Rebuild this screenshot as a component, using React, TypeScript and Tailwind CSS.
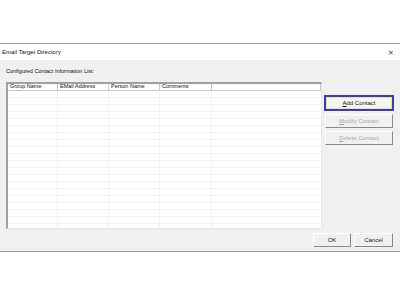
import React from "react";

const cols = [
  { name: "Group Name", w: 50 },
  { name: "EMail Address", w: 51 },
  { name: "Person Name", w: 51 },
  { name: "Comments", w: 52 },
];

function Btn({ children, disabled, focused, w }: { children: React.ReactNode; disabled?: boolean; focused?: boolean; w: string }) {
  return (
    <div
      className={
        "flex items-center justify-center h-[14px] text-[6px] leading-none border " +
        w +
        (focused
          ? " border-[#3a3aa8] border-2 bg-[#f4f4f4] text-[#111]"
          : " border-t-[#ffffff] border-l-[#ffffff] border-r-[#8a8a8a] border-b-[#8a8a8a] bg-[#f0f0f0]") +
        (disabled ? " text-[#a8a8a8]" : " text-[#111]")
      }
    >
      {children}
    </div>
  );
}

export default function App() {
  const rows = Array.from({ length: 20 });
  return (
    <div className="w-[400px] h-[300px] bg-white overflow-hidden" style={{ fontFamily: '"Liberation Sans", Arial, sans-serif' }}>
      <div className="h-[43px]" />
      <div className="border-t border-b border-[#9a9a9a]">
        <div className="h-[16px] bg-white flex items-center justify-between pl-[2px] pr-[6px]">
          <span className="text-[6px] text-[#111] leading-none">Email Target Directory</span>
          <span className="text-[7px] text-[#444] leading-none">✕</span>
        </div>
        <div className="h-[191px] bg-[#f0f0f0] flex flex-col">
          <div className="h-[22px] flex items-center pl-[6px] pt-[1px]">
            <span className="text-[5.5px] text-[#111] leading-none">Configured Contact Information List:</span>
          </div>
          <div className="flex">
            <div className="ml-[6px] w-[316px] h-[147px] bg-white border-t-2 border-l-2 border-t-[#a0a0a0] border-l-[#a0a0a0] border-r border-b border-r-[#e8e8e8] border-b-[#e8e8e8] flex flex-col overflow-hidden">
              <div className="h-[7px] flex border-b border-[#c8c8c8] shrink-0">
                {cols.map((c) => (
                  <div key={c.name} style={{ width: c.w }} className="border-r border-[#c8c8c8] flex items-center pl-[2px] text-[5.5px] text-[#111] leading-none">
                    {c.name}
                  </div>
                ))}
                <div className="flex-1 border-r border-[#c8c8c8]" />
              </div>
              <div className="flex-1 relative">
                {rows.map((_, i) => (
                  <div key={i} className="h-[7px] flex border-b border-[#f3f3f3]">
                    {cols.map((c) => (
                      <div key={c.name} style={{ width: c.w }} className="border-r border-[#f3f3f3]" />
                    ))}
                    <div className="flex-1" />
                  </div>
                ))}
              </div>
            </div>
            <div className="ml-[3px] pt-[14px] flex flex-col gap-[3px]">
              <div className="-ml-[1px] -mt-[1px]">
                <div className="border-2 border-[#3c3caa] w-[70px] h-[16px] p-0">
                  <div className="w-full h-full bg-[#f6f6f0] border border-[#e8e0b0] flex items-center justify-center text-[6px] text-[#111] leading-none">
                    <span><span className="underline">A</span>dd Contact</span>
                  </div>
                </div>
              </div>
              <Btn disabled w="w-[68px]">
                <span><span className="underline">M</span>odify Contact</span>
              </Btn>
              <Btn disabled w="w-[68px]">
                <span><span className="underline">D</span>elete Contact</span>
              </Btn>
            </div>
          </div>
          <div className="flex justify-end gap-[3px] pr-[7px] mt-[4px]">
            <Btn w="w-[38px]">OK</Btn>
            <Btn w="w-[39px]">Cancel</Btn>
          </div>
        </div>
      </div>
    </div>
  );
}
